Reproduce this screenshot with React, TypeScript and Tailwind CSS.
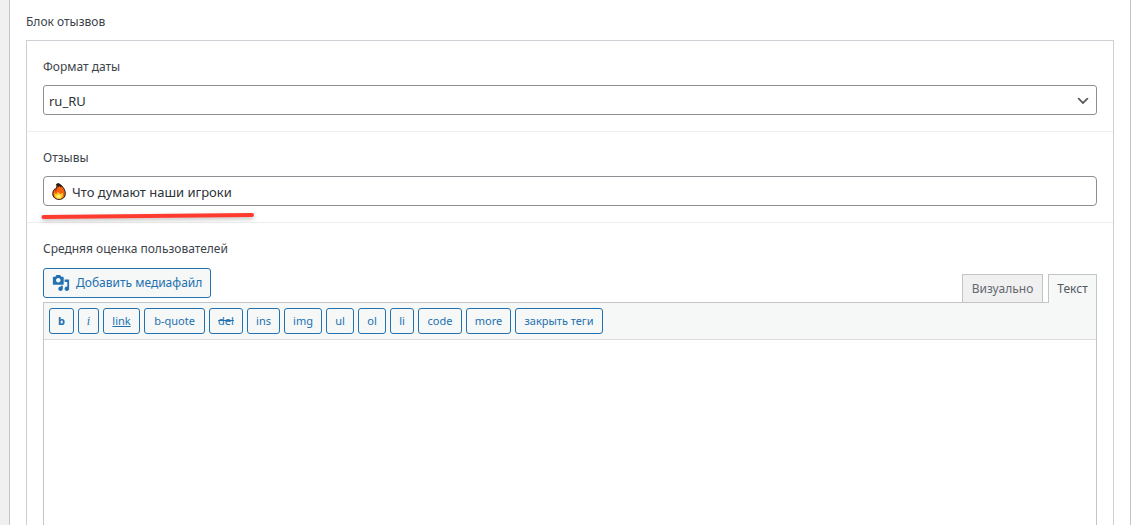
import { useState } from "react";

const tags = [
  { label: "b", style: "w-[25px] font-bold" },
  { label: "i", style: "w-[21px] italic font-['Liberation_Serif',serif] text-[12px]" },
  { label: "link", style: "w-[37px] underline" },
  { label: "b-quote", style: "w-[61px]" },
  { label: "del", style: "w-[34px] line-through" },
  { label: "ins", style: "w-[33px]" },
  { label: "img", style: "w-[38px]" },
  { label: "ul", style: "w-[28px]" },
  { label: "ol", style: "w-[28px]" },
  { label: "li", style: "w-[24px]" },
  { label: "code", style: "w-[44px]" },
  { label: "more", style: "w-[45px]" },
  { label: "закрыть теги", style: "w-[88px]" },
];

const Fire = () => (
  <svg viewBox="0 0 14 17" className="absolute left-[9px] top-[7px] h-[17px] w-[14px]" aria-hidden="true">
    <path d="M4.6 1.2 6.4.6C9.5 1.8 13.3 6 13.3 10.6c0 3.5-2.5 5.8-6.2 5.8S.8 14.2.8 10.8c0-2.3.9-4 2.5-5.3l.5 1.2C4.8 5 5.2 3 4.6 1.2Z" fill="#f7630c" stroke="#1a1513" strokeWidth="1" />
    <path d="M4.5 1 6.5.7C8 1.3 9.2 2.4 10 3.4L8.8 4.2 7.2 3 6.7 4.2 5.7 4Z" fill="#2a1711" />
    <path d="M3 6.3v3l1.6-1.5 1-2.5 1.6-2.2C6 3.9 5.5 5.2 4 6.9Z" fill="#e33b16" />
    <path d="M2.4 9.7 4.2 11.3 6 8.7 8.2 10.9 10.8 10c.8 3.5-1 5.8-3.8 5.8-3 0-5-2-4.6-6.1Z" fill="#ffc928" />
    <path d="M4.2 12.8 6.7 11.6 9 13.1c-.1 1.6-.8 2.4-2.2 2.4-1.4 0-2.4-1-2.6-2.7Z" fill="#fff36b" />
  </svg>
);

const MediaIcon = () => (
  <svg viewBox="0 0 20 20" className="h-[18px] w-[18px] shrink-0" fill="currentColor" aria-hidden="true">
    <path d="M13 11V4c0-.55-.45-1-1-1h-1.67L9 1H5L3.67 3H2c-.55 0-1 .45-1 1v7c0 .55.45 1 1 1h10c.55 0 1-.45 1-1ZM7 4.5c1.38 0 2.5 1.12 2.5 2.5S8.38 9.5 7 9.5 4.5 8.38 4.5 7 5.62 4.5 7 4.5ZM14 6h5v10.5c0 1.38-1.12 2.5-2.5 2.5S14 17.88 14 16.5s1.12-2.5 2.5-2.5c.17 0 .34.02.5.05V9h-3V6Zm-4 8.05V13h2v3.5c0 1.38-1.12 2.5-2.5 2.5S7 17.88 7 16.5 8.12 14 9.5 14c.17 0 .34.02.5.05Z" />
  </svg>
);

const App = () => {
  const [title, setTitle] = useState("Что думают наши игроки");
  const [content, setContent] = useState("");

  return (
    <div className="flex min-h-screen bg-[#f0f0f1] pl-[9px] font-['Noto_Sans',sans-serif] text-[12px] leading-5 text-[#3c434a]">
      <main className="flex flex-1 flex-col border-x border-[#c3c4c7] bg-white px-4 pt-3">
        <h2 className="mb-2">Блок отызвов</h2>

        <div className="flex flex-1 flex-col border border-b-0 border-[#ccd0d4]">
          <div className="border-b border-[#eeeeee] p-4">
            <label htmlFor="date-format" className="mb-2 block">Формат даты</label>
            <div className="relative">
              <select id="date-format" className="block h-[30px] w-full appearance-none rounded-[3px] border border-[#8c8f94] bg-white px-[5px] pt-px text-[13px] text-[#2c3338]">
                <option>ru_RU</option>
              </select>
              <svg viewBox="0 0 20 20" className="pointer-events-none absolute right-[6px] top-2 h-4 w-4" aria-hidden="true">
                <path d="m5 6 5 5 5-5 2 1-7 7-7-7 2-1Z" fill="#555" />
              </svg>
            </div>
          </div>

          <div className="border-b border-[#eeeeee] p-4">
            <label htmlFor="reviews" className="mb-2 block">Отзывы</label>
            <div className="relative">
              <input
                id="reviews"
                type="text"
                value={title}
                onChange={(e) => setTitle(e.target.value)}
                className="block h-[30px] w-full rounded-[4px] border border-[#8c8f94] bg-white pl-7 pr-2 pt-px text-[13px] text-[#2c3338]"
              />
              <Fire />
              <svg viewBox="0 0 220 16" className="pointer-events-none absolute -left-1 top-[32px] h-4 w-[220px] drop-shadow-[0_2px_2px_rgba(0,0,0,0.25)]" aria-hidden="true">
                <path d="M4.5 9 213 7" stroke="#ff3b30" strokeWidth="4" strokeLinecap="round" />
              </svg>
            </div>
          </div>

          <div className="flex flex-1 flex-col px-4 pt-4">
            <label htmlFor="rating" className="mb-2 block">Средняя оценка пользователей</label>
            <div className="flex h-[35px] items-end justify-between">
              <button type="button" className="mb-1 flex h-[30px] items-center gap-[6px] rounded-[3px] border border-[#2271b1] bg-[#f6f7f7] px-2 text-[#2271b1]">
                <MediaIcon />
                Добавить медиафайл
              </button>
              <div className="flex gap-[5px]">
                <button type="button" className="h-7 w-[81px] border border-b-0 border-[#c3c4c7] bg-[#f0f0f1] text-[#646970]">Визуально</button>
                <button type="button" className="relative -mb-px h-[29px] w-[49px] border border-b-0 border-[#c3c4c7] bg-[#f6f7f7] text-[#50575e]">Текст</button>
              </div>
            </div>

            <div className="flex flex-1 flex-col border border-b-0 border-[#c3c4c7]">
              <div className="flex flex-wrap gap-1 border-b border-[#dcdcde] bg-[#f6f7f7] p-[5px]">
                {tags.map((tag) => (
                  <button
                    type="button"
                    key={tag.label}
                    className={`h-[26px] whitespace-nowrap rounded-[3px] border border-[#2271b1] text-center text-[11px] text-[#2271b1] ${tag.style}`}
                  >
                    {tag.label}
                  </button>
                ))}
              </div>
              <textarea
                id="rating"
                value={content}
                onChange={(e) => setContent(e.target.value)}
                className="block w-full flex-1 resize-none bg-white p-2 text-[13px] outline-none"
              />
            </div>
          </div>
        </div>
      </main>
    </div>
  );
};

export default App;
